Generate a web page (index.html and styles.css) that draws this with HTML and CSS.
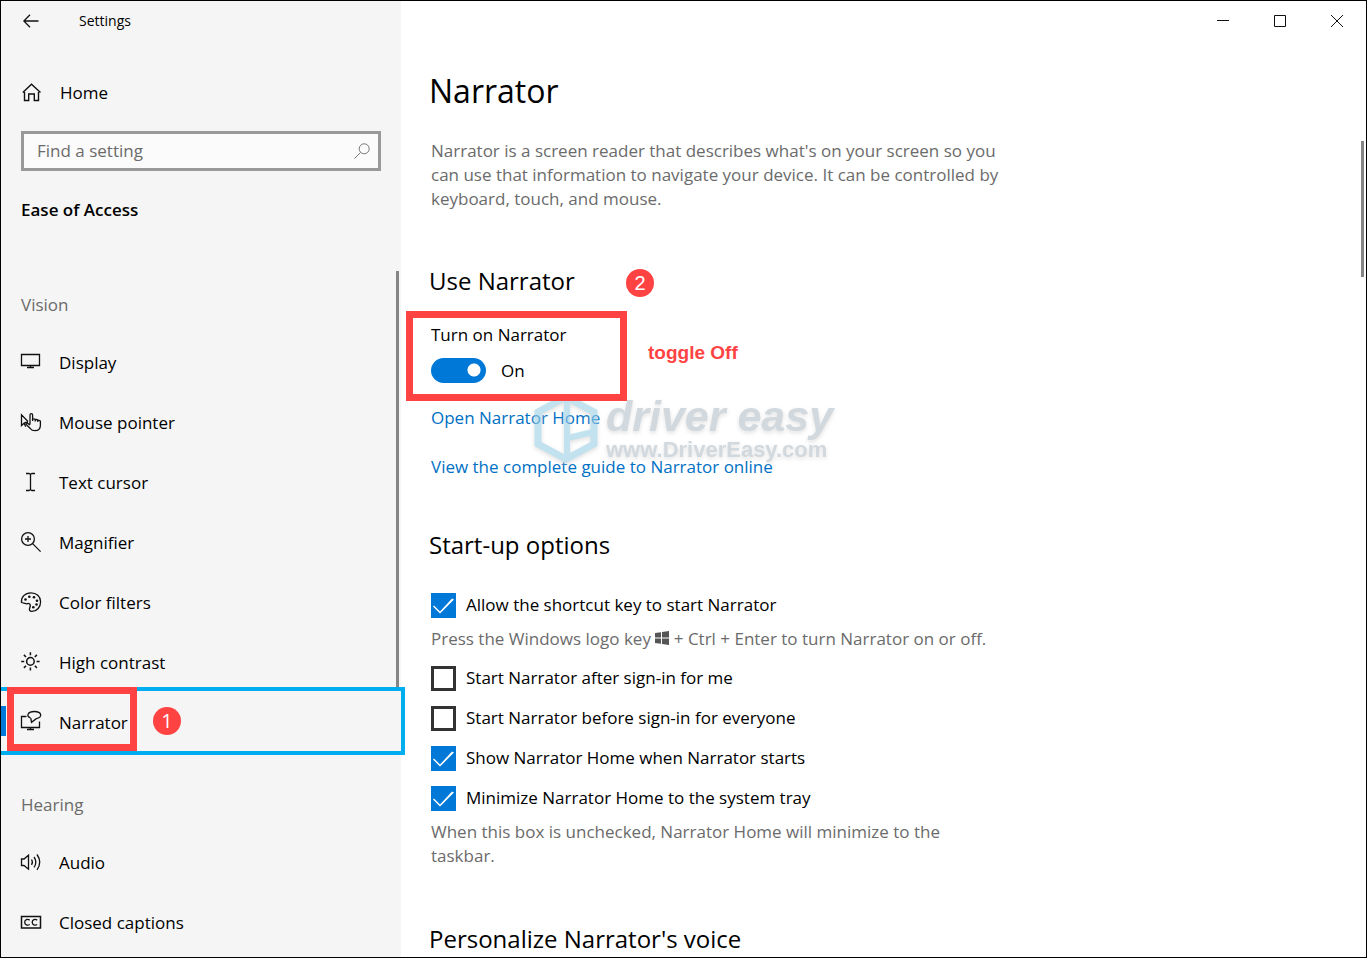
FILE: index.html
```html
<!DOCTYPE html>
<html lang="en">
<head>
<meta charset="utf-8">
<title>Settings</title>
<link rel="stylesheet" href="styles.css">
</head>
<body>
<div class="window">
  <aside class="sidebar">
    <header class="titlebar">
      <button class="back" type="button" aria-label="Back">
        <svg width="16" height="14" viewBox="0 0 16 14"><path d="M7 .7.8 7 7 13.300M.8 7H15.500" stroke-width="1.300"/></svg>
      </button>
      <span>Settings</span>
    </header>
    <a class="home" href="#">
      <svg class="icon" viewBox="0 0 22 22"><path d="M3.500 10v8.500h4.200V12h5.600v6.500h4.200V10M1.800 10.500 10.500 2.300 19.500 10.500" stroke-width="1.400"/></svg>
      <span>Home</span>
    </a>
    <div class="search">
      <input type="search" placeholder="Find a setting" aria-label="Find a setting">
      <svg width="16" height="16" viewBox="0 0 16 16"><circle cx="10.200" cy="5.800" r="5"/><path d="M6.500 9.500.5 15.500"/></svg>
    </div>
    <h2 class="area">Ease of Access</h2>
    <nav class="nav">
      <div class="thumb"></div>
      <h3>Vision</h3>
      <a href="#"><svg class="icon" viewBox="0 0 22 22"><path d="M1.500 2.500h18v11h-18zM10.500 13.500v2M7 15.500h7"/></svg><span>Display</span></a>
      <a href="#"><svg class="icon" viewBox="0 0 22 22"><path d="M8 9.500 1.500 2.800V13.500L4 11.300 5.800 14.800M4 11.300 5.500 10.500H8M10 12.500V3a1.300 1.300 0 0 1 2.600 0v5.500M12.600 9V7.300q1.400-1 2.600 0V9.500M15.200 8q1.400-1 2.600 0v2M17.800 8.700q1.600-.8 2.600.5v4q0 5.500-5.500 5.500-3.200 0-4.600-2.200L6.200 12.500q-.5-1.500 1-1.500l2.800 2"/></svg><span>Mouse pointer</span></a>
      <a href="#"><svg class="icon" viewBox="0 0 22 22"><path d="M6 1.500h3l1.500.8 1.500-.8h3M10.500 2v16M6 18.500h3l1.500-.8 1.500.8h3"/></svg><span>Text cursor</span></a>
      <a href="#"><svg class="icon" viewBox="0 0 22 22"><circle cx="8" cy="7" r="6.400"/><path d="M12.600 11.600l8 8M8 4v6M5 7h6"/></svg><span>Magnifier</span></a>
      <a href="#"><svg class="icon" viewBox="0 0 22 22"><path d="M1.500 10.500C.9 5 5 .8 11 .8c5.400 0 9.600 3.700 9.600 9 0 5.200-3.600 9.600-8.600 9.600-2.600 0-3-1.500-2.300-3.300.8-2 1-3.600-.3-4.400-1.300-.8-2 .5-3.400 0C4.300 11 3.300 11.200 1.500 10.500z"/><g class="dots"><circle cx="5.500" cy="7.500" r="1.300"/><circle cx="9.300" cy="4.700" r="1.300"/><circle cx="14" cy="5.300" r="1.300"/><circle cx="17" cy="8.700" r="1.300"/><circle cx="16.500" cy="12.500" r="1.300"/><circle cx="13.300" cy="15.300" r="1.300"/></g></svg><span>Color filters</span></a>
      <a href="#"><svg class="icon" viewBox="0 0 22 22"><g stroke-width="1.500"><circle cx="10.400" cy="9.400" r="3.800"/><path d="M10.400.2v3M10.400 15.600v3M1.200 9.400h3M16.600 9.400h3M3.900 2.900 6 5M14.800 13.800l2.100 2.100M16.900 2.900 14.800 5M6 13.800l-2.100 2.100"/></g></svg><span>High contrast</span></a>
      <a class="current" href="#" aria-current="page"><svg class="icon" viewBox="0 0 22 22"><path d="M6.500 4.500h-5v11h18V9.500M10.500 15.500v2M7 17.500h7M10.500 6C5.500 4 8-.5 14.300-.5c7.800 0 8.500 6.200 2 7.200L11.500 10.300 10.800 6.100"/></svg><span>Narrator</span><i class="mark mark-nav"></i><b class="badge badge-nav">1</b></a>
      <h3 class="second">Hearing</h3>
      <a href="#"><svg class="icon" viewBox="0 0 22 22"><path d="M1.500 7H4l4.500-3.800v14L4 13.500H1.500zM11.500 7.500q1.800 2.700 0 5.400M14 5q3.700 5.200 0 10.400M17 2.500q5.500 7.700 0 15.400"/></svg><span>Audio</span></a>
      <a href="#"><svg class="icon" viewBox="0 0 22 22"><path d="M1.500 4.500h19v11.500h-19z" stroke-width="1.500"/><path d="M9.700 8.100C7.500 6.600 4.700 7.700 4.700 10.300s2.800 3.700 5 2.200M17.200 8.100c-2.200-1.500-5-.4-5 2.200s2.800 3.700 5 2.200"/></svg><span>Closed captions</span></a>
    </nav>
  </aside>
  <main class="main">
    <header class="controls">
      <button type="button" aria-label="Minimize"><svg width="12" height="12" viewBox="0 0 12 12"><path d="M0 5.500h12"/></svg></button>
      <button type="button" aria-label="Maximize"><svg width="12" height="12" viewBox="0 0 12 12"><path d="M.5.5h11v11H.5z"/></svg></button>
      <button type="button" aria-label="Close"><svg width="12" height="12" viewBox="0 0 12 12"><path d="M0 0l12 12M12 0 0 12"/></svg></button>
    </header>
    <div class="page-thumb"></div>
    <div class="content">
      <h1>Narrator</h1>
      <p class="intro">Narrator is a screen reader that describes what's on your screen so you can use that information to navigate your device. It can be controlled by keyboard, touch, and mouse.</p>

      <section class="use">
        <h2>Use Narrator <b class="badge badge-use">2</b></h2>
        <div class="field">
          <label for="narrator">Turn on Narrator</label>
          <div class="toggle"><input id="narrator" type="checkbox" role="switch" checked><span>On</span></div>
          <i class="mark mark-field"></i>
          <strong class="note">toggle Off</strong>
        </div>
        <a href="#">Open Narrator Home</a>
        <a href="#">View the complete guide to Narrator online</a>
        <div class="watermark">
          <svg width="66" height="72" viewBox="0 0 66 72"><path d="M33 3 61 18v32L33 65 5 50V18z" fill="none" stroke="#9ccfe6" stroke-width="7"/><path d="M34 4v60M35 44l25-6" fill="none" stroke="#9ccfe6" stroke-width="6"/></svg>
          <div><em>driver easy</em><span>www.DriverEasy.com</span></div>
        </div>
      </section>

      <section class="startup">
        <h2>Start-up options</h2>
        <label class="check"><input type="checkbox" checked><span>Allow the shortcut key to start Narrator</span></label>
        <p class="hint">Press the Windows logo key <svg width="14" height="14" viewBox="0 0 14 14" role="img" aria-label="Windows"><path d="M0 2 6 1.200V6.500H0zM7 1l7-1v6.500H7zM0 7.500h6v5.300L0 12zM7 7.500h7V14l-7-1z"/></svg> + Ctrl + Enter to turn Narrator on or off.</p>
        <label class="check"><input type="checkbox"><span>Start Narrator after sign-in for me</span></label>
        <label class="check"><input type="checkbox"><span>Start Narrator before sign-in for everyone</span></label>
        <label class="check"><input type="checkbox" checked><span>Show Narrator Home when Narrator starts</span></label>
        <label class="check"><input type="checkbox" checked><span>Minimize Narrator Home to the system tray</span></label>
        <p class="hint">When this box is unchecked, Narrator Home will minimize to the taskbar.</p>
      </section>

      <section class="voice">
        <h2>Personalize Narrator's voice</h2>
      </section>
    </div>
  </main>
</div>
</body>
</html>
```
FILE: styles.css
```css
* { box-sizing: border-box; }

body {
  margin: 0;
  font: 17px/24px "Open Sans", "Noto Sans", sans-serif;
  color: #000;
  background: #fff;
}

h1, h2, h3, p { margin: 0; font-weight: 400; }
a { color: inherit; text-decoration: none; }
button { border: 0; padding: 0; background: none; font: inherit; }
svg { flex: none; fill: none; stroke: #111; }

.window {
  display: flex;
  height: 100vh;
  overflow: hidden;
  border: 1px solid #000;
}

/* Sidebar */
.sidebar {
  flex: none;
  width: 400px;
  background: #f5f5f5;
}
.titlebar {
  display: flex;
  align-items: center;
  gap: 40px;
  height: 40px;
  padding-left: 22px;
  font-size: 14px;
}
.back { display: flex; }
.home {
  display: flex;
  align-items: center;
  gap: 17px;
  height: 60px;
  margin-top: 22px;
  padding-left: 20px;
}
.icon {
  width: 22px;
  height: 22px;
  overflow: visible;
  stroke-width: 1.300;
}
.dots { fill: #111; stroke: none; }

.search {
  display: flex;
  align-items: center;
  height: 40px;
  margin: 8px 20px 0;
  padding: 0 8px 0 13px;
  border: 3px solid #999;
  background: #fbfbfb;
}
.search input {
  flex: 1;
  min-width: 0;
  border: 0;
  padding: 0;
  outline: 0;
  background: none;
  font: inherit;
}
.search input::placeholder { color: #6b6b6b; opacity: 1; }
.search svg { stroke: #777; }

.area {
  margin: 27px 20px 0;
  font-size: 17px;
  font-weight: 600;
}

.nav { position: relative; margin-top: 49px; }
.thumb {
  position: absolute;
  top: 0;
  right: 2px;
  width: 3px;
  height: 418px;
  background: #858585;
}
.nav h3 {
  padding: 22px 20px 16px;
  font-size: 17px;
  color: #6b6b6b;
}
.nav h3.second { padding-top: 40px; }
.nav a {
  position: relative;
  display: flex;
  align-items: center;
  gap: 17px;
  height: 60px;
  padding-left: 19px;
}
.nav .current::before {
  content: "";
  position: absolute;
  top: 13px;
  left: 0;
  width: 5px;
  height: 30px;
  background: #0078d7;
}
.nav .current::after {
  content: "";
  position: absolute;
  inset: -6px -4px -2px 0;
  border: 4px solid #00adef;
  border-left: 0;
}

/* Callouts */
.mark {
  position: absolute;
  z-index: 1;
  border: 7px solid #ff4343;
}
.mark-nav { left: 6px; top: -6px; width: 130px; height: 64px; }
.mark-field { inset: -12px auto -18px -25px; width: 221px; }
.badge {
  position: absolute;
  width: 28px;
  height: 28px;
  border-radius: 50%;
  background: #ff4343;
  color: #fff;
  font: 20px/28px "Liberation Sans", sans-serif;
  text-align: center;
}
.badge-nav { left: 152px; top: 14px; font-family: "Open Sans", sans-serif; }
.badge-use { left: 197px; top: 5px; }
.note {
  position: absolute;
  left: 217px;
  top: 18px;
  color: #ff4343;
  font: bold 19px/24px "Liberation Sans", sans-serif;
}

/* Main pane */
.main { position: relative; flex: 1; min-width: 0; }
.controls {
  display: flex;
  justify-content: flex-end;
  height: 40px;
  padding-right: 1px;
}
.controls button {
  display: grid;
  place-items: center;
  width: 57px;
}
.page-thumb {
  position: absolute;
  top: 140px;
  right: 2px;
  width: 3px;
  height: 136px;
  background: #858585;
}
.content { padding: 26px 40px 0 28px; }
h1 { font-size: 32px; line-height: 48px; }
.intro, .field, .use > a, .check, .hint { margin-left: 2px; }
.intro { max-width: 570px; margin-top: 24px; color: #6b6b6b; }
.content h2 { position: relative; font-size: 24px; line-height: 34px; }

.use { position: relative; margin-top: 53px; }
.field { position: relative; margin-top: 25px; }
.field label { display: block; }
.toggle {
  display: flex;
  align-items: center;
  gap: 15px;
  margin-top: 11px;
  height: 25px;
}
.toggle input {
  appearance: none;
  width: 55px;
  height: 25px;
  margin: 0;
  border-radius: 13px;
  background: radial-gradient(circle at 43px 12px, #fff 6px, #0078d7 7px);
}
.use > a { display: table; margin-top: 23px; color: #0070c4; }
.use > a + a { margin-top: 25px; }

.watermark {
  position: absolute;
  left: 104px;
  top: 130px;
  display: flex;
  gap: 7px;
  opacity: .6;
  pointer-events: none;
  font-family: "Liberation Sans", sans-serif;
  font-weight: bold;
  color: #b3bfc9;
  filter: drop-shadow(0 2px 2px #ccc);
}
.watermark em { display: block; font-size: 43px; line-height: 45px; }
.watermark span { display: block; font-size: 22px; line-height: 22px; }

.startup { margin-top: 49px; }
.startup h2 { margin-bottom: 23px; }
.check {
  display: flex;
  align-items: center;
  gap: 10px;
  height: 40px;
}
.check input {
  appearance: none;
  width: 25px;
  height: 25px;
  margin: 0;
  border: 3px solid #333;
  background: #fff;
}
.check input:checked {
  border: 0;
  background: #0078d7;
}
.check input:checked::before {
  content: "";
  display: block;
  height: 25px;
  background: #fff;
  clip-path: polygon(2px 14px, 3px 13px, 9px 19px, 21px 6px, 23px 7px, 9px 21px);
}
.hint {
  max-width: 560px;
  padding: 2px 0 7px;
  color: #6b6b6b;
}
.hint svg { fill: #555; stroke: none; }
.voice { margin-top: 47px; }
```
